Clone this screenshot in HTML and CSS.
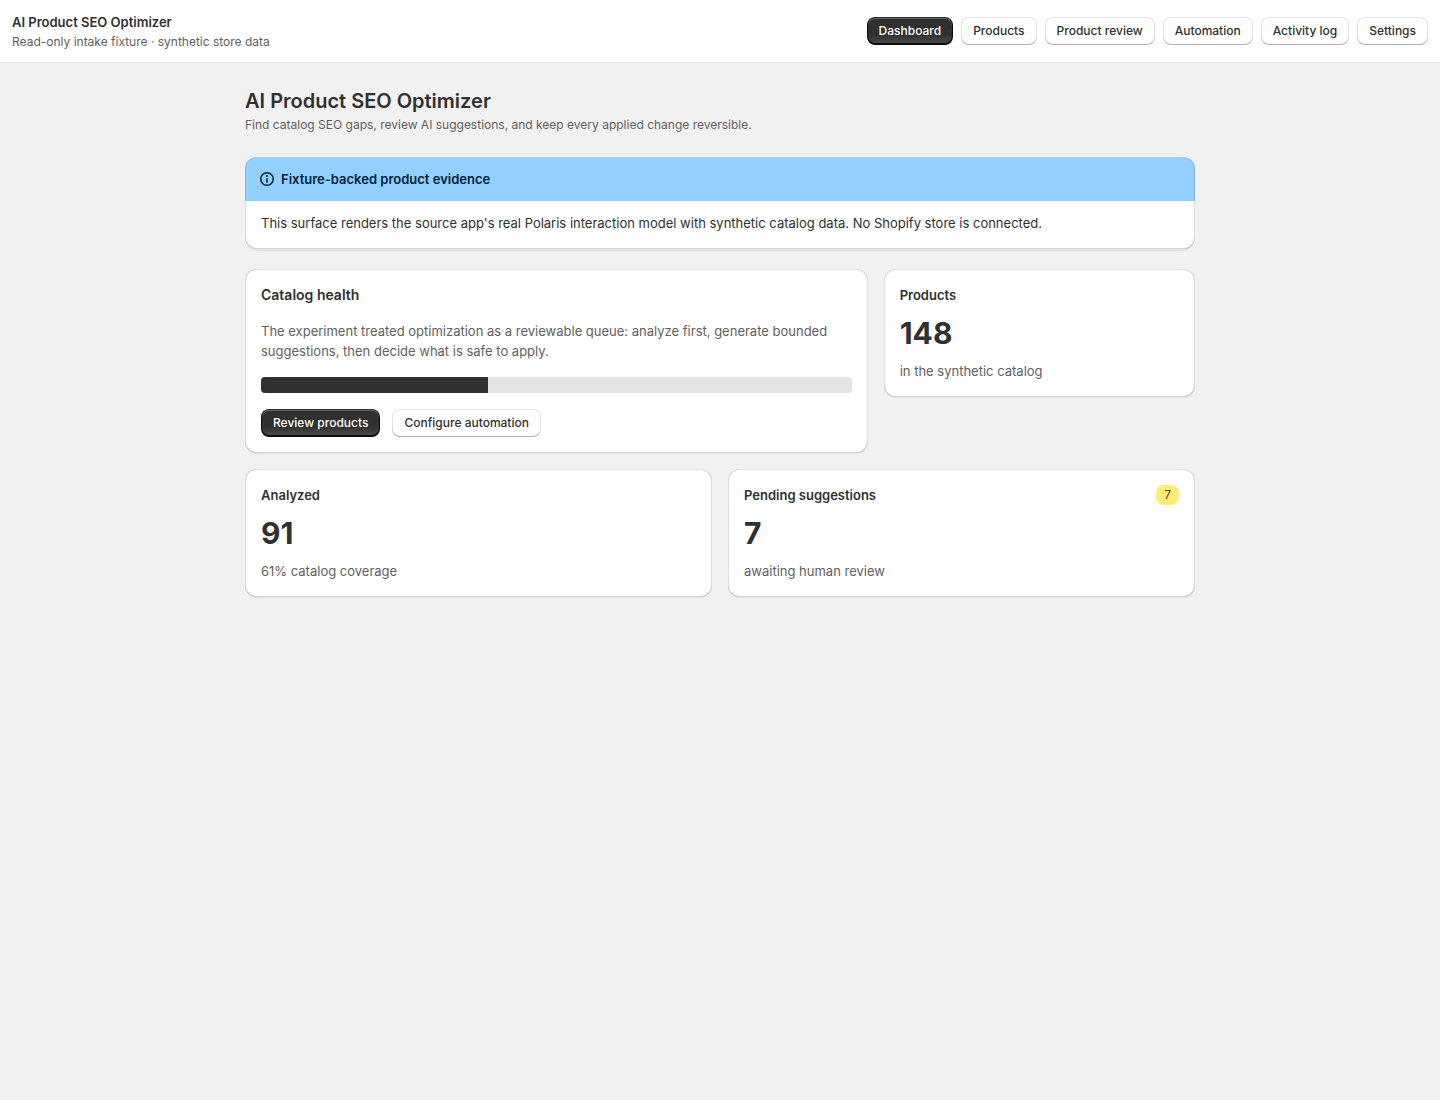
FILE: index.html
```html
<!DOCTYPE html>
<html lang="en">
<head>
    <meta charset="UTF-8">
    <meta name="viewport" content="width=device-width, initial-scale=1.0">
    <title>AI Product SEO Optimizer</title>
    <link rel="stylesheet" href="styles.css">
</head>
<body>
    <header class="topbar">
        <div>
            <p class="brand">AI Product SEO Optimizer</p>
            <p class="small subdued">Read-only intake fixture · synthetic store data</p>
        </div>
        <nav class="nav" aria-label="Main">
            <button type="button" class="btn btn-primary" aria-current="page">Dashboard</button>
            <button type="button" class="btn">Products</button>
            <button type="button" class="btn">Product review</button>
            <button type="button" class="btn">Automation</button>
            <button type="button" class="btn">Activity log</button>
            <button type="button" class="btn">Settings</button>
        </nav>
    </header>

    <main class="page">
        <div class="page-header">
            <h1>AI Product SEO Optimizer</h1>
            <p class="small subdued">Find catalog SEO gaps, review AI suggestions, and keep every applied change reversible.</p>
        </div>

        <section class="card banner">
            <div class="banner-title">
                <svg class="icon" viewBox="0 0 20 20" aria-hidden="true">
                    <path d="M10 14a.75.75 0 0 1-.75-.75v-3.5a.75.75 0 0 1 1.5 0v3.5a.75.75 0 0 1-.75.75Z"/>
                    <path d="M9 7a1 1 0 1 1 2 0 1 1 0 0 1-2 0Z"/>
                    <path fill-rule="evenodd" d="M17 10a7 7 0 1 1-14 0 7 7 0 0 1 14 0Zm-1.500 0a5.500 5.500 0 1 1-11 0 5.500 5.500 0 0 1 11 0Z"/>
                </svg>
                <h2>Fixture-backed product evidence</h2>
            </div>
            <p class="banner-text">This surface renders the source app's real Polaris interaction model with synthetic catalog data. No Shopify store is connected.</p>
        </section>

        <div class="row row-main">
            <section class="card health">
                <h2 class="heading-md">Catalog health</h2>
                <p class="subdued">The experiment treated optimization as a reviewable queue: analyze first, generate bounded suggestions, then decide what is safe to apply.</p>
                <progress class="progress" max="592" value="228" aria-label="Catalog progress"></progress>
                <div class="actions">
                    <button type="button" class="btn btn-primary">Review products</button>
                    <button type="button" class="btn">Configure automation</button>
                </div>
            </section>
            <section class="card stat">
                <h2>Products</h2>
                <p class="number">148</p>
                <p class="subdued">in the synthetic catalog</p>
            </section>
        </div>

        <div class="row">
            <section class="card stat">
                <h2>Analyzed</h2>
                <p class="number">91</p>
                <p class="subdued">61% catalog coverage</p>
            </section>
            <section class="card stat">
                <div class="stat-head">
                    <h2>Pending suggestions</h2>
                    <span class="badge">7</span>
                </div>
                <p class="number">7</p>
                <p class="subdued">awaiting human review</p>
            </section>
        </div>
    </main>
</body>
</html>
```
FILE: styles.css
```css
* {
    box-sizing: border-box;
}
body {
    margin: 0;
    font-family: Inter, sans-serif;
    font-size: 13px;
    line-height: 20px;
    font-weight: 400;
    color: #303030;
    background: #f1f1f1;
    -webkit-font-smoothing: antialiased;
    text-rendering: optimizeLegibility;
}
h1, h2, p {
    margin: 0;
}
h2 {
    font-size: 13px;
    line-height: 20px;
    font-weight: 600;
}
.brand {
    font-weight: 600;
}
.small {
    font-size: 12px;
}
.subdued {
    color: #616161;
}

/* top bar */
.topbar {
    display: flex;
    align-items: center;
    justify-content: space-between;
    flex-wrap: wrap;
    gap: 12px;
    padding: 12px 12px 10px;
    background: #fff;
    border-bottom: 1px solid #e3e3e3;
}
.nav, .actions {
    display: flex;
    flex-wrap: wrap;
    gap: 8px;
}
.nav {
    padding-bottom: 2px;
}
.actions {
    gap: 12px;
}
.btn {
    padding: 6px 12px;
    border: 0;
    border-radius: 8px;
    font: 500 12px/16px Inter, sans-serif;
    color: #303030;
    background: #fff;
    box-shadow: inset 0 -1px 0 #b5b5b5, inset 0 0 0 1px #e3e3e3;
    cursor: pointer;
}
.btn-primary {
    color: #fff;
    background: #303030 linear-gradient(180deg, rgba(48, 48, 48, 0) 63%, rgba(255, 255, 255, 0.15) 100%);
    box-shadow: inset 0 -1px 0 1px rgba(0, 0, 0, 0.8), inset 0 0 0 1px #303030, inset 0 1px 0 1px rgba(255, 255, 255, 0.25);
}

/* page */
.page {
    max-width: 998px;
    margin: 0 auto;
    padding: 26px 24px;
}
.page-header {
    margin-bottom: 22px;
}
h1 {
    margin-bottom: 2px;
    font-size: 20px;
    line-height: 24px;
    font-weight: 600;
}
.card {
    position: relative;
    padding: 16px;
    border-radius: 12px;
    background: #fff;
    box-shadow: 0 1px 0 rgba(26, 26, 26, 0.07);
}
/* bevelled edge over the card content */
.card::after {
    content: "";
    position: absolute;
    inset: 0;
    border-radius: 12px;
    box-shadow: inset 1px 0 0 rgba(0, 0, 0, 0.13), inset -1px 0 0 rgba(0, 0, 0, 0.13), inset 0 -1px 0 rgba(0, 0, 0, 0.17), inset 0 1px 0 rgba(204, 204, 204, 0.5);
    pointer-events: none;
}
.banner {
    margin-bottom: 20px;
    padding: 0;
    box-shadow: 0 3px 1px -1px rgba(26, 26, 26, 0.07);
}
.banner-title {
    display: flex;
    align-items: center;
    gap: 4px;
    padding: 12px;
    border-radius: 12px 12px 0 0;
    color: #002133;
    background: #91d0ff;
}
.icon {
    width: 20px;
    height: 20px;
    fill: currentColor;
}
.banner-text {
    padding: 12px 16px 16px;
}
.row {
    display: grid;
    grid-template-columns: 1fr 1fr;
    gap: 16px;
    align-items: start;
    margin-bottom: 16px;
}
.row-main {
    grid-template-columns: 2fr 1fr;
}
.health {
    display: grid;
    gap: 16px;
}
.heading-md {
    font-size: 14px;
}
.progress {
    display: block;
    width: 100%;
    height: 16px;
    border: 0;
    border-radius: 4px;
    overflow: hidden;
    background: #e3e3e3;
    appearance: none;
}
.progress::-webkit-progress-bar {
    background: #e3e3e3;
}
.progress::-webkit-progress-value {
    background: #303030;
}
.stat {
    display: grid;
    gap: 8px;
}
.number {
    font-size: 30px;
    line-height: 40px;
    font-weight: 700;
}
.stat-head {
    display: flex;
    justify-content: space-between;
}
.badge {
    padding: 2px 8px;
    border-radius: 8px;
    font-size: 12px;
    line-height: 16px;
    color: #4f4700;
    background: #ffeb78;
}

@media (max-width: 700px) {
    .row, .row-main {
        grid-template-columns: 1fr;
    }
}
```
